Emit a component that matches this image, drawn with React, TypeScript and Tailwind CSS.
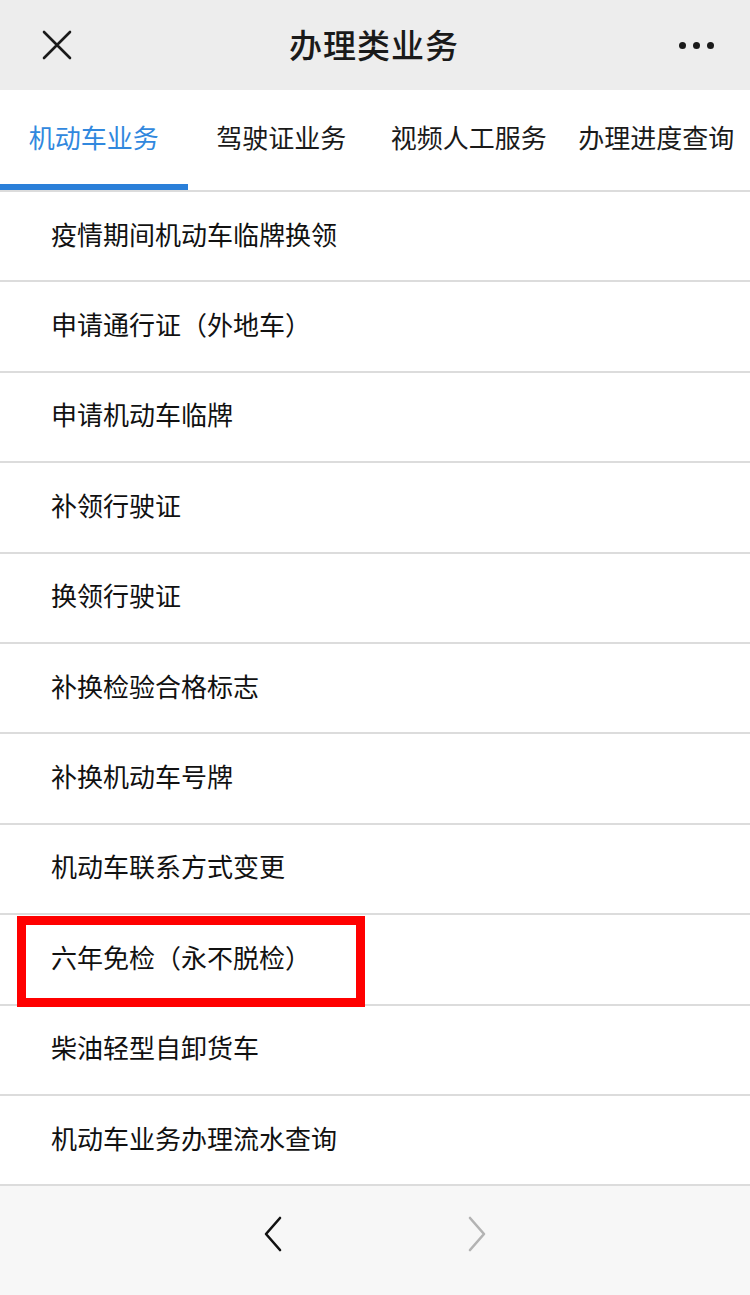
import React from "react";

const items = [
  "疫情期间机动车临牌换领",
  "申请通行证（外地车）",
  "申请机动车临牌",
  "补领行驶证",
  "换领行驶证",
  "补换检验合格标志",
  "补换机动车号牌",
  "机动车联系方式变更",
  "六年免检（永不脱检）",
  "柴油轻型自卸货车",
  "机动车业务办理流水查询",
];

const tabs = ["机动车业务", "驾驶证业务", "视频人工服务", "办理进度查询"];

export default function App() {
  return (
    <div
      className="w-[750px] h-[1295px] bg-white flex flex-col overflow-hidden relative"
      style={{ fontFamily: '"Noto Sans CJK SC", "Noto Sans", sans-serif' }}
    >
      {/* Header */}
      <div className="h-[90px] bg-[#ededed] flex items-center justify-between pl-[40px] pr-[36px] shrink-0">
        <svg width="32" height="32" viewBox="0 0 32 32" className="ml-[1px]">
          <path d="M3 3 L29 29 M29 3 L3 29" stroke="#1a1a1a" strokeWidth="2.6" strokeLinecap="round" />
        </svg>
        <div className="text-[33px] font-medium text-[#1a1a1a] tracking-[1px] -ml-[4px]">办理类业务</div>
        <div className="flex gap-[7px] items-center">
          <span className="w-[7px] h-[7px] rounded-full bg-[#1a1a1a]" />
          <span className="w-[7px] h-[7px] rounded-full bg-[#1a1a1a]" />
          <span className="w-[7px] h-[7px] rounded-full bg-[#1a1a1a]" />
        </div>
      </div>

      {/* Tabs */}
      <div className="h-[102px] flex border-b-2 border-[#dcdcdc] shrink-0">
        {tabs.map((t, i) => (
          <div key={t} className="flex-1 relative flex items-center justify-center pb-[8px]">
            <span className={`text-[26px] ${i === 0 ? "text-[#3188de]" : "text-[#1a1a1a]"}`}>{t}</span>
            {i === 0 && <div className="absolute left-0 right-0 bottom-0 h-[6px] bg-[#2a7fd9]" />}
          </div>
        ))}
      </div>

      {/* List */}
      <div className="flex flex-col">
        {items.map((t) => (
          <div
            key={t}
            className="h-[90.4px] box-border border-b-2 border-[#dcdcdc] flex items-center pl-[51px] pb-[6px]"
          >
            <span className="text-[26px] text-[#111111]">{t}</span>
          </div>
        ))}
      </div>

      {/* Highlight box */}
      <div className="absolute left-[17px] top-[916px] w-[348px] h-[91px] border-[9px] border-[#ff0000]" />

      {/* Footer */}
      <div className="flex-1 bg-[#f7f7f7] flex items-center justify-center gap-[178px] pb-[14px]">
        <svg width="24" height="36" viewBox="0 0 24 36">
          <path d="M18 2 L4 18 L18 34" stroke="#111" strokeWidth="2.6" fill="none" strokeLinecap="round" strokeLinejoin="round" />
        </svg>
        <svg width="24" height="36" viewBox="0 0 24 36">
          <path d="M6 2 L20 18 L6 34" stroke="#b3b3b3" strokeWidth="2.6" fill="none" strokeLinecap="round" strokeLinejoin="round" />
        </svg>
      </div>
    </div>
  );
}
